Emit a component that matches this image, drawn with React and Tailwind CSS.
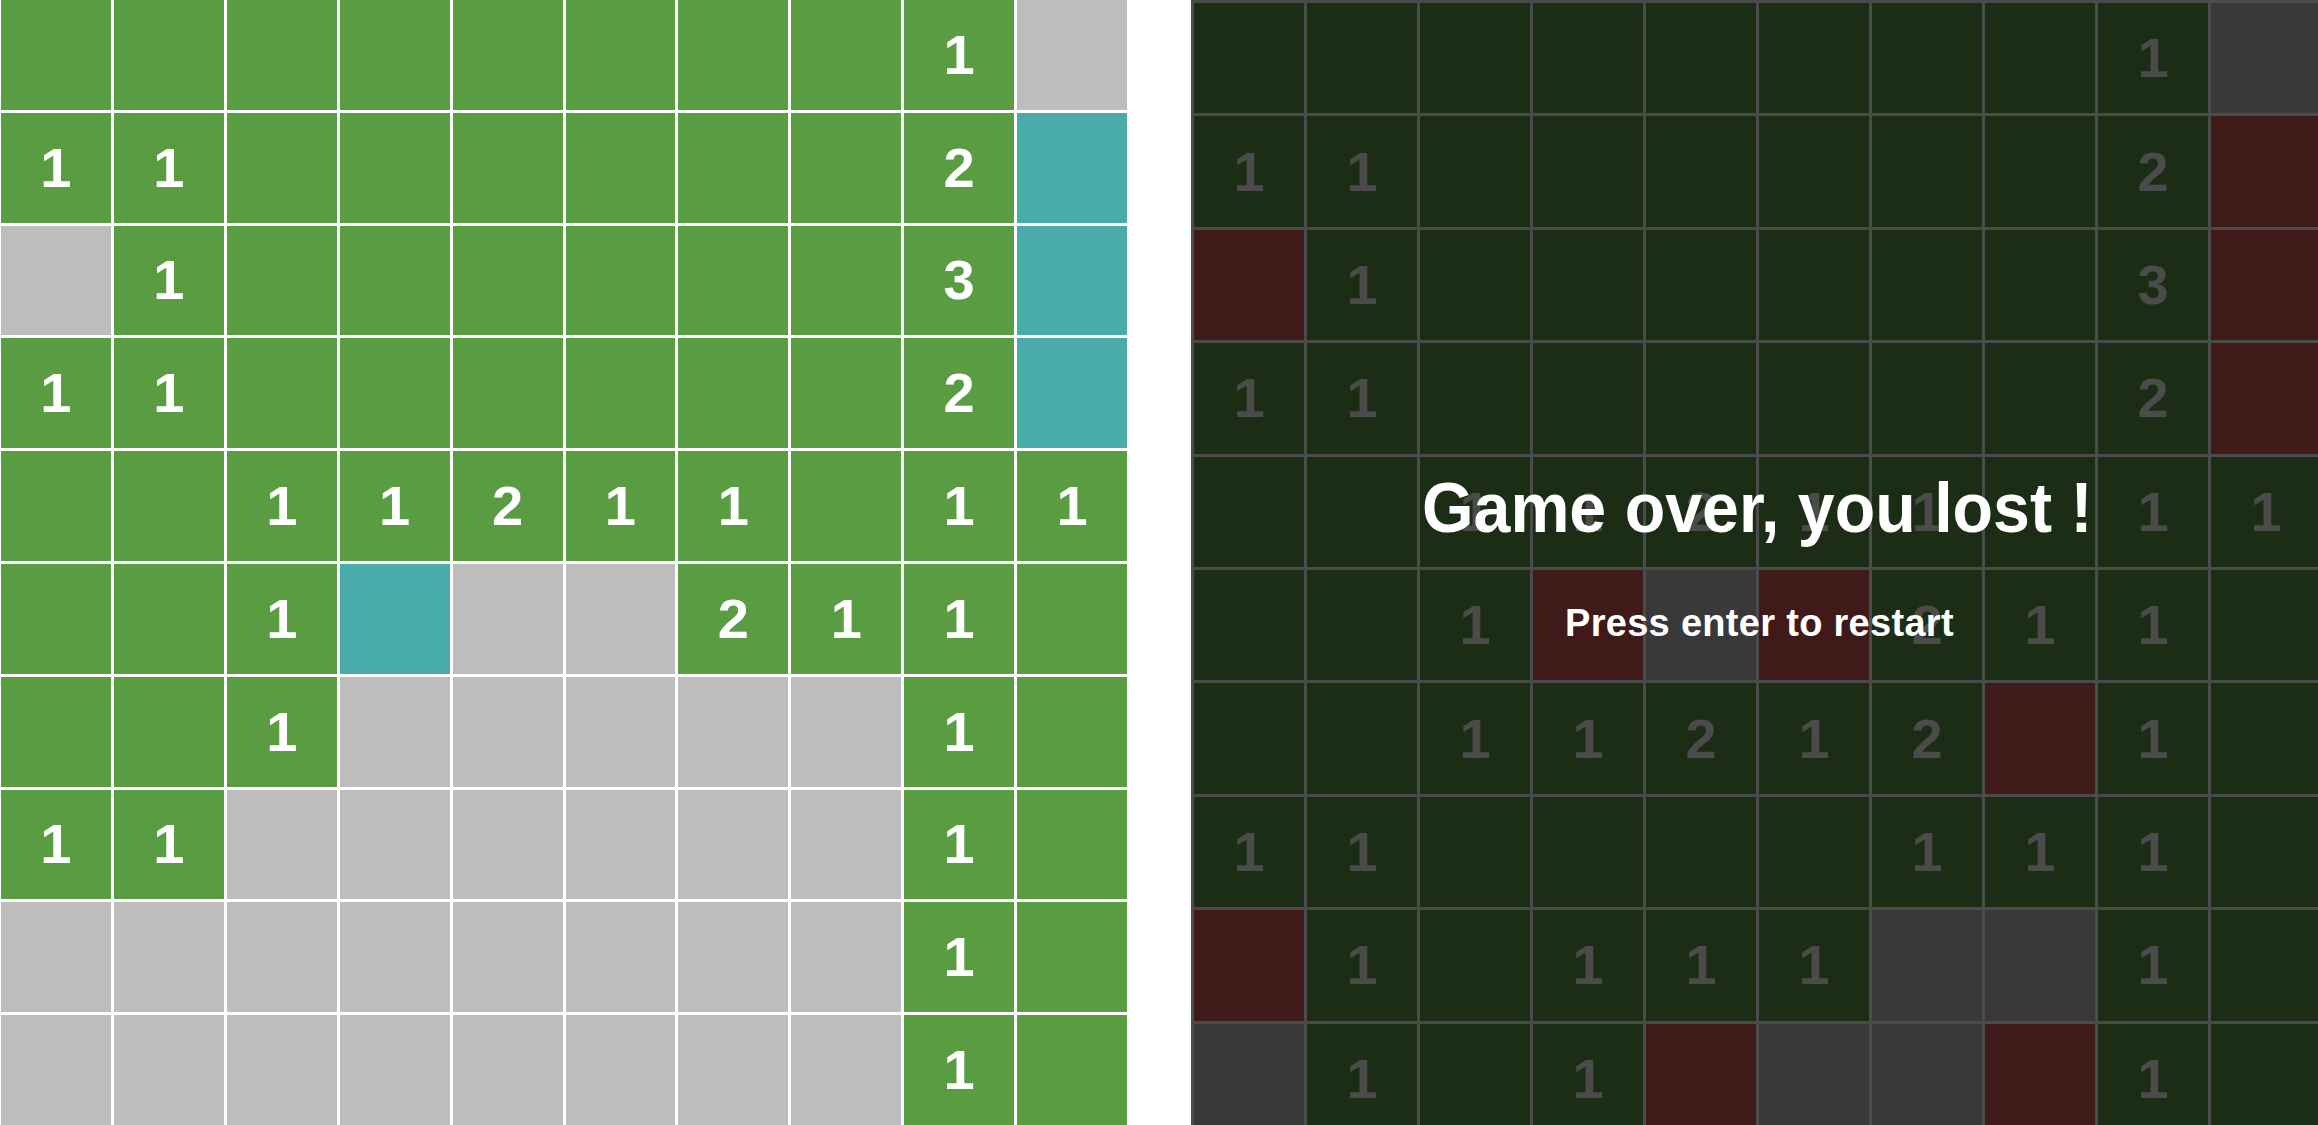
const LIGHT = [
  "GGGGGGGG1S",
  "11GGGGGG2T",
  "S1GGGGGG3T",
  "11GGGGGG2T",
  "GG11211G11",
  "GG1TSS211G",
  "GG1SSSSS1G",
  "11SSSSSS1G",
  "SSSSSSSS1G",
  "SSSSSSSS1G",
];

const DARK = [
  "DDDDDDDD1K",
  "11DDDDDD2R",
  "R1DDDDDD3R",
  "11DDDDDD2R",
  "DD11211D11",
  "DD1RKR211D",
  "DD11212R1D",
  "11DDDD111D",
  "R1D111KK1D",
  "K1D1RKKR1D",
];

const isNum = (c) => c >= "1" && c <= "9";

const LightCell = ({ c }) => {
  const bg =
    c === "S" ? "bg-[#bdbdbd]" : c === "T" ? "bg-[#4aaca8]" : "bg-[#5a9c42]";
  return (
    <div
      className={`${bg} flex items-center justify-center text-white font-bold text-[56px] leading-none`}
    >
      {isNum(c) ? c : ""}
    </div>
  );
};

const DarkCell = ({ c }) => {
  const bg =
    c === "R" ? "bg-[#3f1a18]" : c === "K" ? "bg-[#393939]" : "bg-[#1b2d14]";
  return (
    <div
      className={`${bg} flex items-center justify-center text-[#4b4b4b] font-bold text-[56px] leading-none`}
    >
      {isNum(c) ? c : ""}
    </div>
  );
};

export default function App() {
  return (
    <div className="w-[2318px] h-[1125px] bg-white flex overflow-hidden font-['Liberation_Sans',Arial,sans-serif]">
      {/* PLAYING BOARD */}
      <div className="w-[1127px] h-[1125px] shrink-0 pl-[1px] grid grid-cols-10 grid-rows-10 gap-[3px]">
        {LIGHT.flatMap((row, r) =>
          row.split("").map((c, i) => <LightCell key={`${r}-${i}`} c={c} />)
        )}
      </div>

      {/* GAME OVER BOARD */}
      <div className="relative ml-[64px] w-[1127px] h-[1125px] shrink-0 overflow-hidden bg-[#4b4b4b]">
        <div className="pt-[3px] pl-[3px] grid grid-cols-[repeat(10,110px)] grid-rows-[repeat(10,110.4px)] gap-[3px]">
          {DARK.flatMap((row, r) =>
            row.split("").map((c, i) => <DarkCell key={`${r}-${i}`} c={c} />)
          )}
        </div>

        <div className="absolute left-[231px] top-[473px] text-white font-bold text-[70px] leading-none whitespace-nowrap origin-left scale-x-[0.947]">
          Game over, you lost !
        </div>
        <div className="absolute left-[374px] top-[604px] text-white font-bold text-[38px] leading-none tracking-[0.3px] whitespace-nowrap">
          Press enter to restart
        </div>
      </div>
    </div>
  );
}
